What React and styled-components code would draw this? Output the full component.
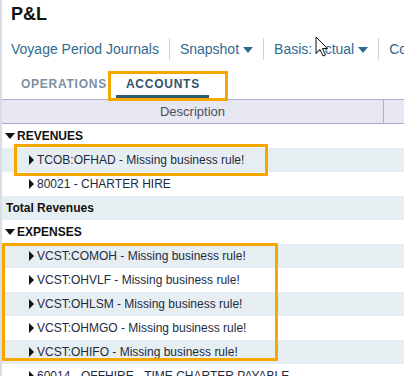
import React from "react";
import styled, { createGlobalStyle } from "styled-components";

const Global = createGlobalStyle`
  html, body { margin: 0; padding: 0; background: #fff; }
  body { font-family: "Liberation Sans", Arial, sans-serif; overflow: hidden; }
`;

const ORANGE = "#f6a800";

const Page = styled.div`
  width: 404px;
  height: 376px;
  box-sizing: border-box;
  border-left: 2px solid #dadee4;
  overflow: hidden;
  position: relative;
`;

const Title = styled.h1`
  margin: 0;
  padding: 4px 0 0 9px;
  height: 30px;
  box-sizing: border-box;
  font-size: 18px;
  font-weight: bold;
  color: #111;
  line-height: 21px;
`;

const Toolbar = styled.div`
  display: flex;
  align-items: center;
  height: 26px;
  margin-top: 6px;
  padding-left: 9px;
  white-space: nowrap;
`;

const ToolItem = styled.div`
  display: flex;
  align-items: center;
  gap: 4px;
  font-size: 14px;
  color: #2f6a8f;
  padding: 0 10px;
  height: 22px;
  border-left: ${(p) => (p.$first ? "none" : "1px solid #cfd3d8")};
  padding-left: ${(p) => (p.$first ? "0" : "10px")};
`;

const Caret = styled.span`
  display: inline-block;
  width: 0;
  height: 0;
  border-left: 5px solid transparent;
  border-right: 5px solid transparent;
  border-top: 6px solid #2f6a8f;
  margin-top: 1px;
`;

const Tabs = styled.div`
  display: flex;
  height: 27px;
  margin-top: 10px;
  padding-left: 9px;
`;

const Tab = styled.div`
  position: relative;
  padding: 5px 9px 0 10px;
  font-size: 12px;
  font-weight: bold;
  letter-spacing: 0.75px;
  color: ${(p) => (p.$active ? "#33546b" : "#7d90a2")};
  box-sizing: border-box;
  height: 27px;
  &::before {
    content: "";
    display: ${(p) => (p.$active ? "block" : "none")};
    position: absolute;
    left: 0;
    right: 0;
    bottom: 1px;
    height: 3px;
    background: #2f5b73;
  }
`;

const Highlight = styled.div`
  position: relative;
  &::after {
    content: "";
    position: absolute;
    pointer-events: none;
    box-sizing: border-box;
    border: 3px solid ${ORANGE};
    top: ${(p) => p.$top}px;
    bottom: ${(p) => p.$bottom}px;
    left: ${(p) => p.$left}px;
    width: ${(p) => p.$width}px;
  }
`;

const TabHighlight = styled(Highlight)`
  display: flex;
`;

const HeaderRow = styled.div`
  display: grid;
  grid-template-columns: 382px 1fr;
  height: 25px;
  box-sizing: border-box;
  background: #e7e7f1;
  border-top: 1px solid #b3aed0;
  border-bottom: 1px solid #aaa5cb;
`;

const HeaderCell = styled.div`
  display: flex;
  align-items: center;
  justify-content: center;
  font-size: 13px;
  color: #4b4f58;
  border-right: ${(p) => (p.$last ? "none" : "1px solid #b3aed0")};
`;

const Row = styled.div`
  display: flex;
  align-items: center;
  height: 24px;
  background: ${(p) => (p.$striped ? "#e7eef2" : "#fff")};
  padding-left: ${(p) => p.$indent}px;
  font-size: 12px;
  font-weight: ${(p) => (p.$bold ? "bold" : "normal")};
  color: ${(p) => (p.$bold ? "#111" : "#1d2a40")};
  white-space: nowrap;
`;

const Expander = styled.span`
  display: inline-block;
  width: 0;
  height: 0;
  margin-right: ${(p) => (p.$open ? 2 : 3)}px;
  ${(p) =>
    p.$open
      ? `border-left: 5px solid transparent; border-right: 5px solid transparent; border-top: 6px solid #111;`
      : `border-top: 5px solid transparent; border-bottom: 5px solid transparent; border-left: 5px solid #111;`}
`;

const Cursor = styled.svg`
  position: absolute;
  left: 313px;
  top: 36px;
`;

const expenses = [
  "VCST:COMOH - Missing business rule!",
  "VCST:OHVLF - Missing business rule!",
  "VCST:OHLSM - Missing business rule!",
  "VCST:OHMGO - Missing business rule!",
  "VCST:OHIFO - Missing business rule!",
];

function GridRow({ text, bold, open, child, indent, striped }) {
  return (
    <Row $bold={bold} $striped={striped} $indent={child ? 27 : indent}>
      {(open || child) && <Expander $open={open} />}
      {text}
    </Row>
  );
}

export default function App() {
  return (
    <>
      <Global />
      <Page>
        <Title>P&amp;L</Title>
        <Toolbar>
          <ToolItem $first>Voyage Period Journals</ToolItem>
          <ToolItem>
            Snapshot <Caret />
          </ToolItem>
          <ToolItem>
            Basis: Actual <Caret />
          </ToolItem>
          <ToolItem>Co</ToolItem>
        </Toolbar>
        <Tabs>
          <Tab>OPERATIONS</Tab>
          <TabHighlight $top={-1} $bottom={-2} $left={-8} $width={120}>
            <Tab $active>ACCOUNTS</Tab>
          </TabHighlight>
        </Tabs>
        <HeaderRow>
          <HeaderCell>Description</HeaderCell>
          <HeaderCell $last />
        </HeaderRow>
        <GridRow text="REVENUES" bold open indent={3} />
        <Highlight $top={-4} $bottom={-4} $left={12} $width={254}>
          <GridRow text="TCOB:OFHAD - Missing business rule!" child striped />
        </Highlight>
        <GridRow text="80021 - CHARTER HIRE" child />
        <GridRow text="Total Revenues" bold indent={4} striped />
        <GridRow text="EXPENSES" bold open indent={3} />
        <Highlight $top={-1} $bottom={3} $left={0} $width={276}>
          {expenses.map((t, i) => (
            <GridRow key={t} text={t} child striped={i % 2 === 0} />
          ))}
        </Highlight>
        <GridRow text="60014 - OFFHIRE - TIME CHARTER PAYABLE" child />
        <Cursor width="14" height="22" viewBox="0 0 14 22">
          <path
            d="M1 1 L1 17 L5 13.5 L8 20 L10.5 19 L7.5 12.5 L12.5 12.5 Z"
            fill="#fff"
            stroke="#111"
            strokeWidth="1"
            strokeLinejoin="round"
          />
        </Cursor>
      </Page>
    </>
  );
}
